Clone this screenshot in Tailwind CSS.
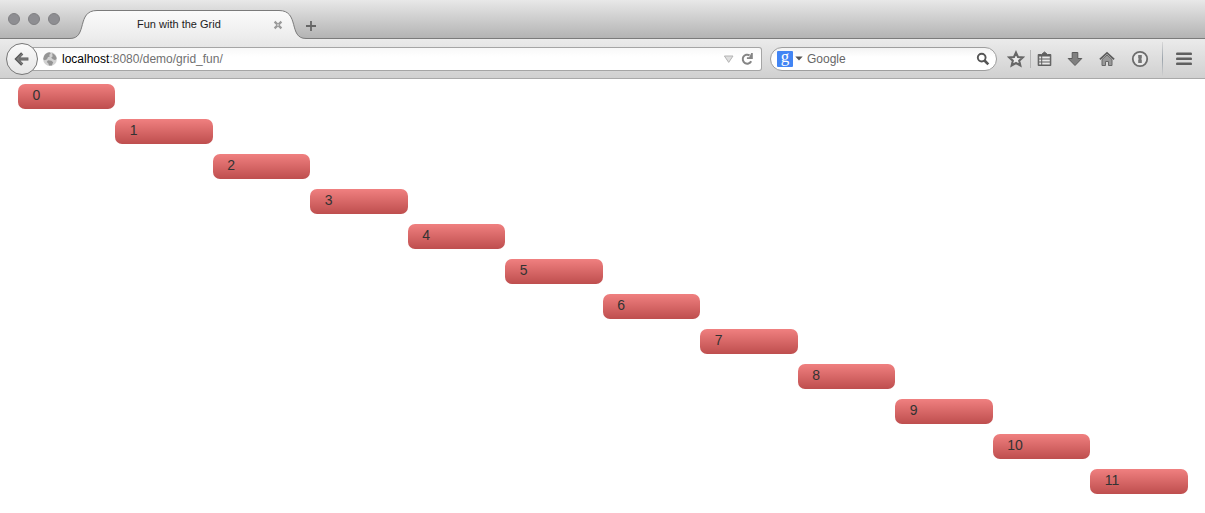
<!DOCTYPE html>
<html lang="en">
<head>
<meta charset="utf-8">
<title>Fun with the Grid</title>
<script src="https://cdn.jsdelivr.net/npm/@tailwindcss/browser@4"></script>
</head>
<body class="bg-white font-['Liberation_Sans',Arial,sans-serif] overflow-hidden">
<header class="h-[79px]">
  <div class="relative h-[39px] flex items-center bg-linear-to-b from-[#e8e8e8] to-[#b2b2b2]">
    <svg class="absolute inset-0" width="1205" height="39" viewBox="0 0 1205 39">
      <defs><linearGradient id="tab" x1="0" y1="0" x2="0" y2="1"><stop offset="0" stop-color="#fbfbfb"/><stop offset="1" stop-color="#ebebeb"/></linearGradient></defs>
      <path d="M70 38.5C88 38.5 76 10.5 97 10.5H279C300 10.5 288 38.5 306 38.5V40H70Z" fill="url(#tab)"/>
      <path d="M0 38.5H70C88 38.5 76 10.5 97 10.5H279C300 10.5 288 38.5 306 38.5H1205" fill="none" stroke="#7b7b7b"/>
    </svg>
    <div class="relative flex gap-2 pl-2 -mt-[2px]">
      <i class="size-3 rounded-full bg-[#8e8e92] border border-[#808083]"></i>
      <i class="size-3 rounded-full bg-[#8e8e92] border border-[#808083]"></i>
      <i class="size-3 rounded-full bg-[#8e8e92] border border-[#808083]"></i>
    </div>
    <div class="relative ml-[77px] mt-[9px] w-[136px] text-[11px] leading-[14px] text-[#1c1c1c] whitespace-nowrap">Fun with the Grid</div>
    <svg class="relative mt-[11px]" width="10" height="10" viewBox="0 0 10 10" stroke="#999" stroke-width="2.2"><path d="M1.6 1.6l6.8 6.8M8.4 1.6L1.6 8.4"/><path d="M4 5h2" stroke="#eee" stroke-width="1"/></svg>
    <svg class="relative ml-[22px] mt-[13px]" width="12" height="12" viewBox="0 0 12 12" stroke="#666" stroke-width="1.8"><path d="M6 1v10M1 6h10"/></svg>
  </div>

  <div class="h-10 flex items-center bg-linear-to-b from-[#ebebeb] to-[#d0d0d0] border-b border-[#a9a9a9]">
    <div class="relative z-10 ml-[6px] size-8 shrink-0 rounded-full border border-[#777] bg-linear-to-b from-[#fafafa] to-[#e6e6e6] flex items-center justify-center">
      <svg width="16" height="16" viewBox="0 0 16 16" fill="none"><path d="M8.2 2.4L2.6 8L8.2 13.6M3 8H14.4" stroke="#555" stroke-width="3.1"/><path d="M8.2 3L3.1 8L8.2 13M3.4 8H13.8" stroke="#7c7c7c" stroke-width="1.5"/></svg>
    </div>
    <div class="-ml-[5px] h-6 w-[729px] flex items-center rounded-r-[3px] border border-[#a5a5a5] border-l-0 bg-linear-to-b from-[#f8f8f8] to-white to-40% pl-[10px] text-xs text-[#707070]">
      <svg width="14" height="14" viewBox="0 0 14 14"><circle cx="7" cy="7" r="6.9" fill="#d2d2d2"/><path d="M1 4.2C2.2 1.8 4 .6 6.5 .3L7.8 1.8L6.2 2.8L6.8 4.4L4.9 5.2L4 7.3L1.6 8.3L.2 7.2ZM9 1.2C11.5 2 13.2 4 13.7 6.2L12.2 8.2L10 7.2L8.2 5.8L9.7 4.3ZM5 8.2L8.4 8.8L10.2 10.2L8.8 13.5L6 13.6L5.4 11.4L3.8 10Z" fill="#959595"/></svg>
      <div class="ml-[5px] flex-1 leading-[14px]"><span class="text-black">localhost</span>:8080/demo/grid_fun/</div>
      <svg class="mt-px" width="11" height="9" viewBox="0 0 11 9"><path d="M1.4 1H10L5.7 7.4Z" fill="#dedede" stroke="#b4b4b4"/></svg>
      <svg class="ml-[6px] mr-[7px]" width="14" height="14" viewBox="0 0 14 14"><path d="M9.6 3.3A4.5 4.5 0 1 0 11.2 9.3" fill="none" stroke="#858585" stroke-width="2"/><path d="M12.8 1V7H6.9V5.2H9.2L11.2 1Z" fill="#858585"/></svg>
    </div>
    <div class="ml-[8px] h-6 w-[227px] flex items-center rounded-full border border-[#9e9e9e] bg-linear-to-b from-[#f3f3f3] to-white to-40% pl-[6px] text-xs text-[#666]">
      <div class="size-4 rounded-[1px] bg-[#4285f4] text-white font-['Liberation_Serif',serif] text-[17px] leading-[11px] text-center">g</div>
      <svg class="ml-[2px]" width="8" height="5" viewBox="0 0 8 5"><path d="M.3 .5H7.7L4 4.5Z" fill="#555"/></svg>
      <div class="ml-1 flex-1 leading-[14px]">Google</div>
      <svg class="mr-[6px]" width="14" height="14" viewBox="0 0 14 14" fill="none" stroke="#555"><circle cx="5.7" cy="5.6" r="3.9" stroke-width="1.9"/><path d="M8.5 8.5L12.3 12.4" stroke-width="2.6"/></svg>
    </div>
    <svg class="ml-[10px]" width="18" height="18" viewBox="0 0 18 18"><path d="M9 2.6L11 7L15.8 7.4L12.2 10.7L13.3 15.5L9 13L4.7 15.5L5.8 10.7L2.2 7.4L7 7Z" fill="#ececec" stroke="#666" stroke-width="2.1"/></svg>
    <div class="ml-[5px] h-[18px] w-px bg-[#b5b5b5]"></div>
    <svg class="ml-[6px]" width="15" height="16" viewBox="0 0 15 16"><path d="M1.2 3.5H4.5L7.5 1L10.5 3.5H13.8V14.5H1.2Z" fill="#5f5f5f" stroke="#5f5f5f" stroke-linejoin="round"/><path d="M2.2 6.5h2M5.2 6.5h7.6M2.2 9.5h2M5.2 9.5h7.6M2.2 12.5h2M5.2 12.5h7.6" stroke="#e8e8e8" stroke-width="1.8"/></svg>
    <svg class="ml-[15px]" width="16" height="16" viewBox="0 0 16 16"><path d="M5.2 1.5H10.8V7.5H14.8L8 14.5L1.2 7.5H5.2Z" fill="#808080" stroke="#5a5a5a"/></svg>
    <svg class="ml-[16px]" width="16" height="16" viewBox="0 0 16 16"><path d="M3 8.5L8 4L13 8.5V14.5H9.5V10.5H6.5V14.5H3Z" fill="#999" stroke="#686868"/><path d="M.9 8.4L8 1.9L15.1 8.4" fill="none" stroke="#5c5c5c" stroke-width="1.8"/></svg>
    <svg class="ml-[16px]" width="18" height="18" viewBox="0 0 18 18"><circle cx="9" cy="9" r="7.2" fill="#e9e9e9" stroke="#6c6c6c" stroke-width="1.8"/><path d="M7.2 5H10.8V8.2L10.1 9L10.8 9.7V13H7.2V9.8L7.9 9L7.2 8.3Z" fill="#747474"/></svg>
    <div class="ml-[13px] h-[34px] w-px bg-linear-to-b from-[#d8d8d8] via-[#9ca4ac] to-[#d0d0d0]"></div>
    <svg class="ml-[13px]" width="16" height="14" viewBox="0 0 16 14" fill="#5f5f5f"><rect y="0.5" width="16" height="2.6" rx="1.2"/><rect y="5.5" width="16" height="2.6" rx="1.2"/><rect y="10.5" width="16" height="2.6" rx="1.2"/></svg>
  </div>
</header>

<main class="pt-[5px] pl-[18px] w-[1187.8px] grid grid-cols-12 auto-rows-[25px] gap-y-[10px] text-sm leading-[23px] text-[#333] *:rounded-[7px] *:pl-[14.4px] *:bg-linear-to-b *:from-[#f08080] *:to-[#be4e4e]">
  <div class="col-start-1 row-start-1">0</div>
  <div class="col-start-2 row-start-2">1</div>
  <div class="col-start-3 row-start-3">2</div>
  <div class="col-start-4 row-start-4">3</div>
  <div class="col-start-5 row-start-5">4</div>
  <div class="col-start-6 row-start-6">5</div>
  <div class="col-start-7 row-start-7">6</div>
  <div class="col-start-8 row-start-8">7</div>
  <div class="col-start-9 row-start-9">8</div>
  <div class="col-start-10 row-start-10">9</div>
  <div class="col-start-11 row-start-11">10</div>
  <div class="col-start-12 row-start-12">11</div>
</main>
</body>
</html>
